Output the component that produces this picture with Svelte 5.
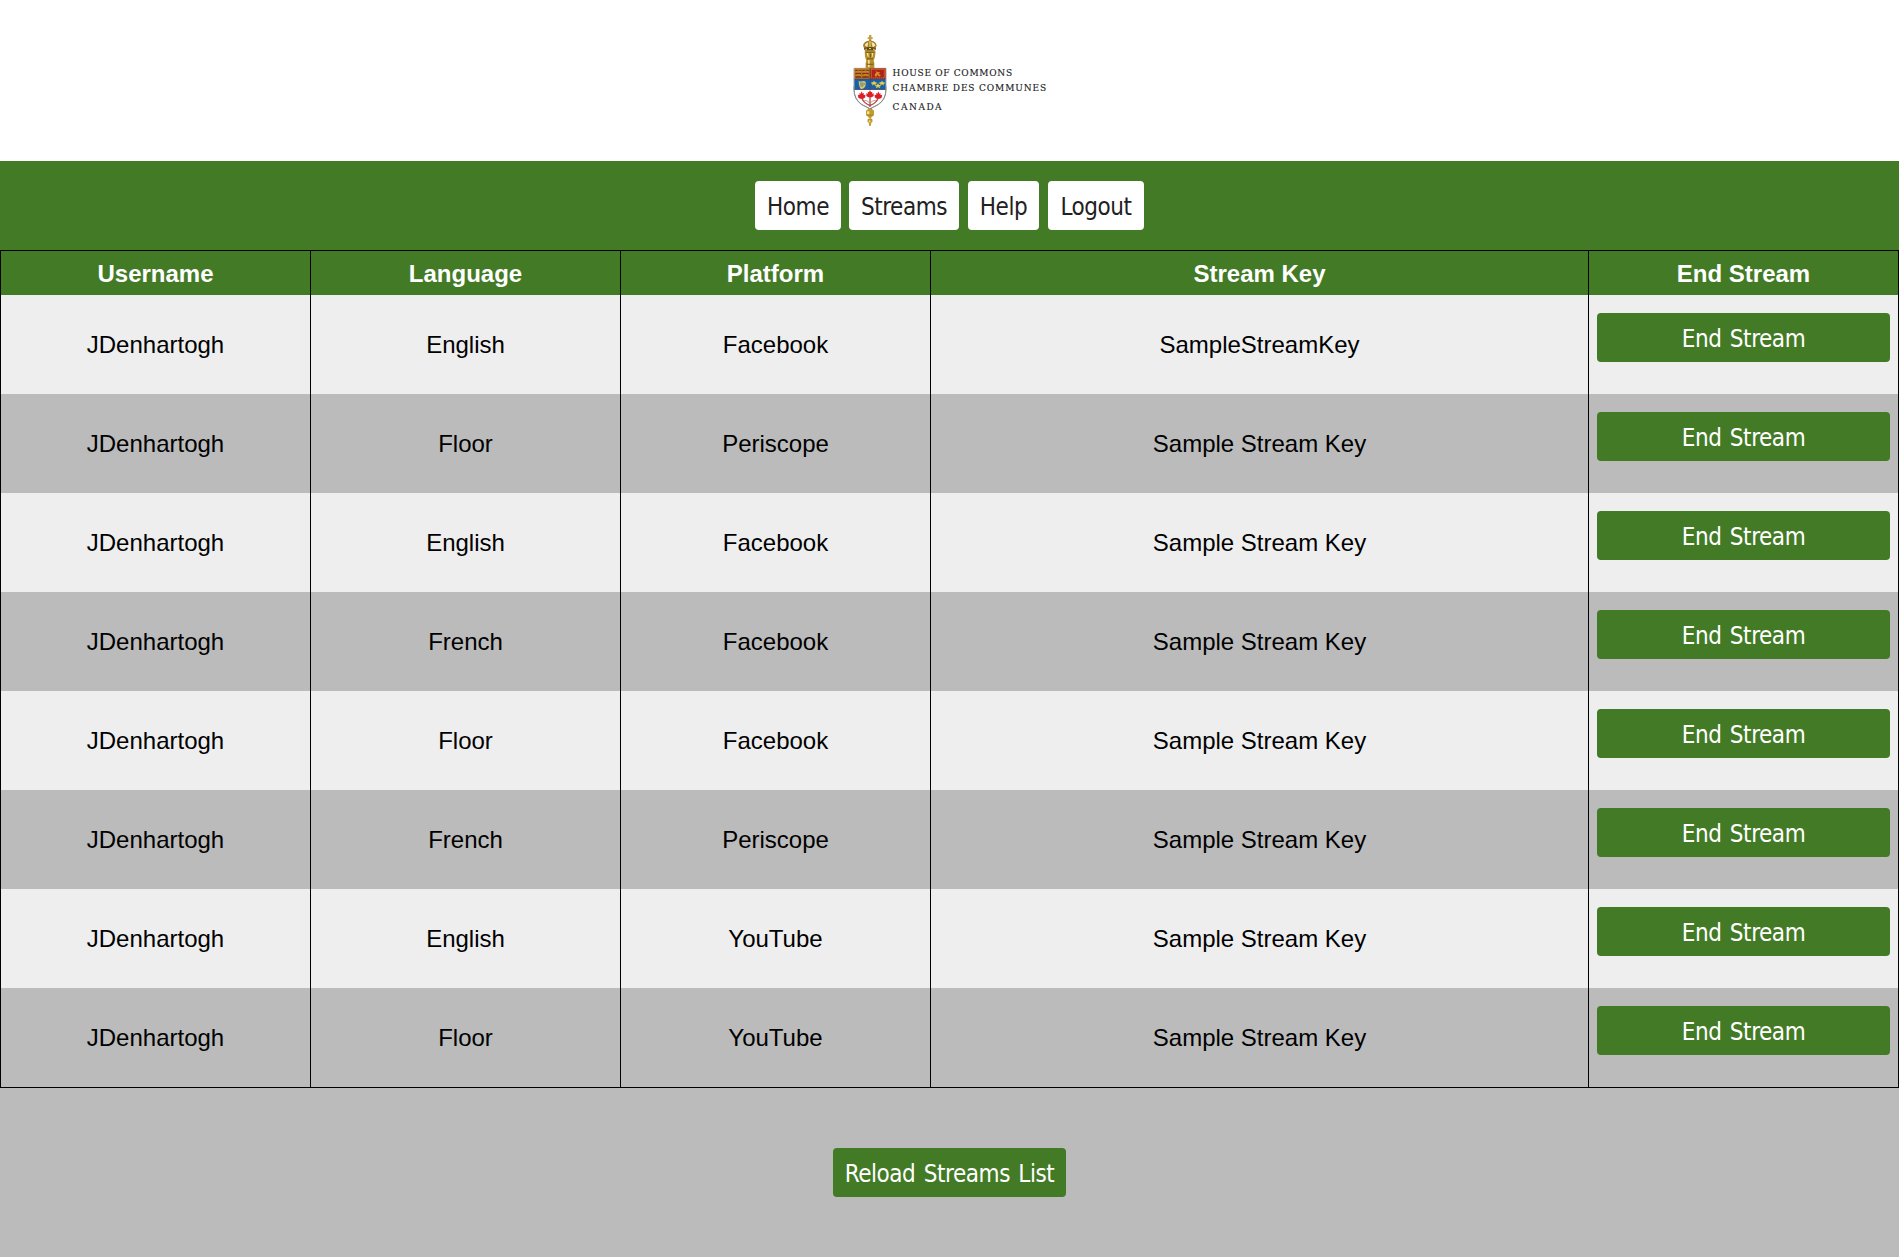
<script>
  const nav = [
    { label: 'Home', size: 'home' },
    { label: 'Streams', size: 'streams' },
    { label: 'Help', size: 'help' },
    { label: 'Logout', size: 'logout' },
  ];
  const columns = ['Username', 'Language', 'Platform', 'Stream Key', 'End Stream'];
  const streams = [
    ['JDenhartogh', 'English', 'Facebook', 'SampleStreamKey'],
    ['JDenhartogh', 'Floor', 'Periscope', 'Sample Stream Key'],
    ['JDenhartogh', 'English', 'Facebook', 'Sample Stream Key'],
    ['JDenhartogh', 'French', 'Facebook', 'Sample Stream Key'],
    ['JDenhartogh', 'Floor', 'Facebook', 'Sample Stream Key'],
    ['JDenhartogh', 'French', 'Periscope', 'Sample Stream Key'],
    ['JDenhartogh', 'English', 'YouTube', 'Sample Stream Key'],
    ['JDenhartogh', 'Floor', 'YouTube', 'Sample Stream Key'],
  ];
</script>

<header>
  <svg class="logo" viewBox="0 0 210 100" role="img" aria-label="House of Commons Canada">
    <g transform="scale(0.33333)">
      <!-- mace head and crown -->
      <path d="M72 21h7v7h4v5h-4v7h-7v-7h-4v-5h4z" fill="#c4a040" />
      <path d="M54 52q2-12 17-14l4-3 4 3q14 2 16 14l-4 12-5 7H63l-5-7z" fill="#a58227" />
      <path d="M59 52q3-8 11-9l-3 15zM79 43q10 1 12 10l-8 5z" fill="#f5e7b0" />
      <path d="M73 39h4v19h-4z" fill="#e5c763" />
      <path d="M57 60q18-6 36 0l-2 7q-16-4-32 0z" fill="#5e4a1d" />
      <path d="M61 62h5v3h-5zM72 60h6v3h-6zM84 62h5v3h-5z" fill="#e9cf72" />
      <path d="M59 70h33l-2 16-4 12 2 7v17H62v-17l2-7-4-12z" fill="#b58f2b" />
      <path d="M65 74h5l1 14-4-4zM80 74h5l-2 12-4 3zM69 96h5v22h-5z" fill="#f3df91" />
      <path d="M62 71h27v3H62zM66 91h18v3H66zM65 107h20v3H65zM75 77h4v11h-4z" fill="#75591b" />
      <!-- mace foot -->
      <path d="M69 223h12v20l6 5v13l-8 7v7l5 4-5 5-2 10h-4l-2-10-5-5 5-4v-7l-8-7v-13l6-5z" fill="#c39c2e" />
      <path d="M71 224h3v20h-3zM66 250h7v9h-7zM72 271h4v12h-4z" fill="#f5e190" />
      <path d="M77 225h3v19h-3zM65 260h20v3H65zM68 274h14v3H68z" fill="#a08230" />
      <!-- shield -->
      <path d="M27 121h96v62q0 32-23 47l-25 13-25-13q-23-15-23-47z" fill="#fff" stroke="#71737b" stroke-width="2" />
      <path d="M28 121h47v32H28z" fill="#b47520" />
      <path d="M75 121h47v32H75z" fill="#ad2318" />
      <path d="M31 126h17v3H31zM52 126h19v3H52zM31 135h17v4H31zM52 135h19v4H52zM31 145h17v4H31zM52 145h19v4H52z" fill="#8a2b15" />
      <path d="M34 131l7-3 7 4M55 131l7-3 7 4M34 142l7-3 7 4M55 142l7-3 7 4" fill="none" stroke="#e0ad34" stroke-width="2" />
      <path d="M79 124h39v26H79z" fill="none" stroke="#cf7c2a" stroke-width="3" stroke-dasharray="4 2" />
      <path d="M90 145q-3-7 4-11l-3-5 7 3 8 1-5 4 7 5-6 4-4-6-4 6z" fill="#d98a28" />
      <path d="M28 153h94v32H28z" fill="#1761a8" />
      <path d="M28 152h94v2H28zM28 184h94v2H28zM74 121h2v64h-2z" fill="#583f55" />
      <path d="M41 158q6 4 9 2 7-3 12 1 2 14-6 20l-7 3-4-4q-5-11-4-22z" fill="#d8c267" />
      <path d="M46 164l3 12M50 163l2 13M54 163v11M58 165v6" stroke="#24679b" stroke-width="1.5" />
      <g fill="#edcf4b">
        <path d="M87 158l3 5h5v4h-4l2 5h-3l-3-4-3 4h-3l2-5h-4v-4h5z" />
        <path d="M99 166l3 5h5v4h-4l2 5h-3l-3-4-3 4h-3l2-5h-4v-4h5z" />
        <path d="M111 158l3 5h5v4h-4l2 5h-3l-3-4-3 4h-3l2-5h-4v-4h5z" />
      </g>
      <path d="M75 204v33M50 208q3 15 25 25M100 208q-3 15-25 25" fill="none" stroke="#b94747" stroke-width="4" />
      <path d="M58 217q11-1 17 10 6-11 17-10" fill="none" stroke="#b88b8b" stroke-width="2.5" />
      <!-- maple leaves -->
      <g fill="#da1f26">
        <path d="M50 190l3 7 4-2-1 6 6-1-2 5 2 2-7 5h-10l-7-5 2-2-2-5 6 1-1-6 4 2z" />
        <path d="M75 186l3 7 4-2-1 6 6-1-2 5 2 2-7 5h-10l-7-5 2-2-2-5 6 1-1-6 4 2z" />
        <path d="M100 190l3 7 4-2-1 6 6-1-2 5 2 2-7 5h-10l-7-5 2-2-2-5 6 1-1-6 4 2z" />
      </g>
      <path d="M27 175v8q0 31 23 46l25 13 25-13q23-15 23-46v-8" fill="none" stroke="#7e8188" stroke-width="2.5" />
    </g>
    <g class="wordmark">
      <text x="47.6" y="47.8" textLength="119.5">HOUSE OF COMMONS</text>
      <text x="47.6" y="62.8" textLength="153.5">CHAMBRE DES COMMUNES</text>
      <text x="47.6" y="81.6" textLength="49">CANADA</text>
    </g>
  </svg>
</header>

<nav>
  {#each nav as item}
    <button class="btn light {item.size}">{item.label}</button>
  {/each}
</nav>

<table>
  <colgroup>
    <col class="narrow" /><col class="narrow" /><col class="narrow" /><col /><col class="last" />
  </colgroup>
  <thead>
    <tr>{#each columns as column}<th>{column}</th>{/each}</tr>
  </thead>
  <tbody>
    {#each streams as stream}
      <tr>
        {#each stream as value}<td>{value}</td>{/each}
        <td class="action"><button class="btn">End Stream</button></td>
      </tr>
    {/each}
  </tbody>
</table>

<footer><button class="btn reload">Reload Streams List</button></footer>

<style>
  :global(body) {
    background: #bbb;
    font-family: 'Liberation Sans', Arial, sans-serif;
    font-size: 24px;
  }
  header {
    box-sizing: border-box;
    height: 161px;
    padding: 28px 0 0 1px;
    background: #fff;
    display: flex;
    justify-content: center;
  }
  .logo { width: 210px; height: 100px; }
  .wordmark {
    font-family: 'DejaVu Serif Condensed', 'DejaVu Serif', serif;
    font-size: 10px;
    fill: #1c1c1e;
    stroke: #1c1c1e;
    stroke-width: 0.15px;
  }
  nav {
    box-sizing: border-box;
    height: 89px;
    padding-top: 20px;
    background: #437a26;
    display: flex;
    justify-content: center;
    gap: 8px;
  }
  .btn {
    box-sizing: border-box;
    height: 49px;
    padding: 4px 0 0;
    border: 0;
    border-radius: 4px;
    background: #437a26;
    color: #fff;
    font-family: Tahoma, 'DejaVu Sans Condensed', 'DejaVu Sans', sans-serif;
    font-stretch: condensed;
    font-size: 24px;
    line-height: 45px;
    letter-spacing: -0.45px;
    word-spacing: 2px;
    white-space: nowrap;
  }
  .light { background: #fff; color: #212121; }
  .home { width: 86px; }
  .streams { width: 110px; }
  .help { width: 71px; margin-left: 1px; }
  .logout { width: 96px; margin-left: 1px; }
  .reload { width: 233px; }
  table {
    width: 100%;
    table-layout: fixed;
    border-collapse: separate;
    border-spacing: 0;
    border-top: 1px solid #000;
    border-bottom: 1px solid #000;
  }
  .narrow { width: 310px; }
  .last { width: 311px; }
  th, td {
    box-sizing: border-box;
    padding: 0;
    border-left: 1px solid #000;
    text-align: center;
    vertical-align: middle;
  }
  th:last-child, td:last-child { border-right: 1px solid #000; }
  th { height: 44px; padding-top: 2px; background: #437a26; color: #fff; line-height: 28px; }
  td { height: 99px; padding-top: 1px; background: #bbb; color: #000; line-height: 28px; }
  tbody tr:nth-child(odd) td { background: #eee; }
  td.action { padding: 18px 8px 0; vertical-align: top; }
  .action .btn { display: block; width: 100%; }
  footer {
    display: flex;
    justify-content: center;
    padding: 60px 0;
  }
</style>
